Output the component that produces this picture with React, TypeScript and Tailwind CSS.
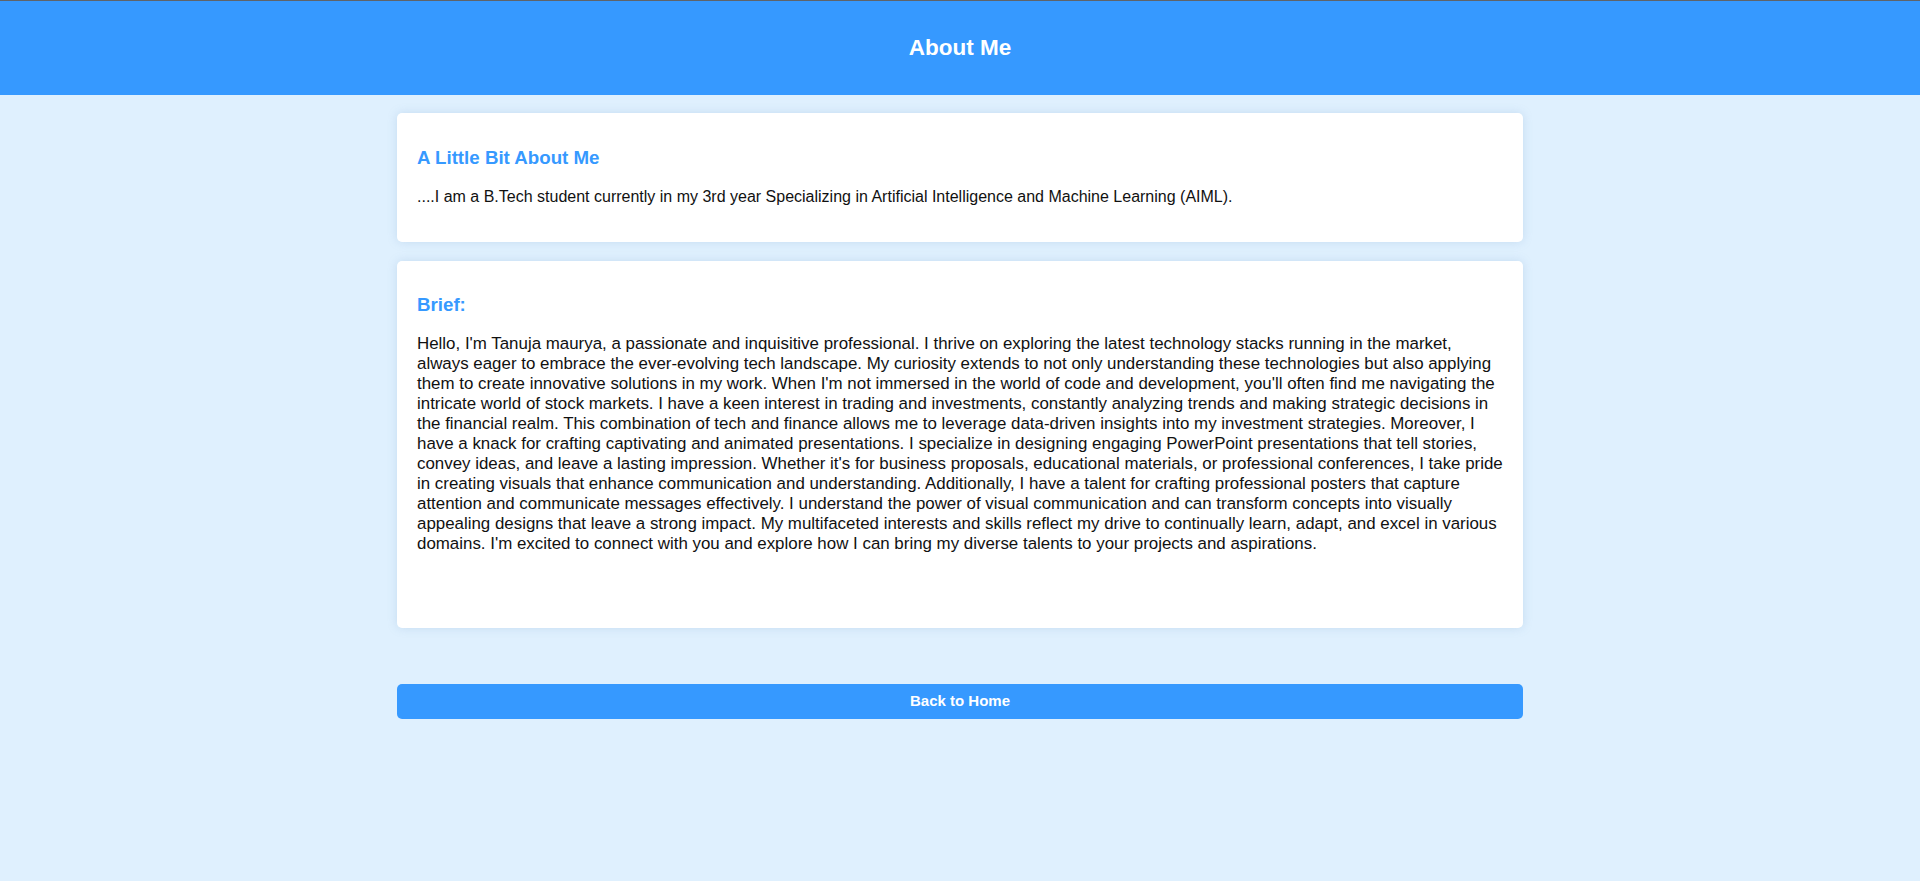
const BRIEF =
  "Hello, I'm Tanuja maurya, a passionate and inquisitive professional. I thrive on exploring the latest technology stacks running in the market, always eager to embrace the ever-evolving tech landscape. My curiosity extends to not only understanding these technologies but also applying them to create innovative solutions in my work. When I'm not immersed in the world of code and development, you'll often find me navigating the intricate world of stock markets. I have a keen interest in trading and investments, constantly analyzing trends and making strategic decisions in the financial realm. This combination of tech and finance allows me to leverage data-driven insights into my investment strategies. Moreover, I have a knack for crafting captivating and animated presentations. I specialize in designing engaging PowerPoint presentations that tell stories, convey ideas, and leave a lasting impression. Whether it's for business proposals, educational materials, or professional conferences, I take pride in creating visuals that enhance communication and understanding. Additionally, I have a talent for crafting professional posters that capture attention and communicate messages effectively. I understand the power of visual communication and can transform concepts into visually appealing designs that leave a strong impact. My multifaceted interests and skills reflect my drive to continually learn, adapt, and excel in various domains. I'm excited to connect with you and explore how I can bring my diverse talents to your projects and aspirations.";

function Card({ title, children, className, textClass }: { title: string; children: React.ReactNode; className: string; textClass: string }) {
  return (
    <section className={`rounded-[5px] bg-white px-5 shadow-[0_0_10px_rgba(120,160,200,0.25)] ${className}`}>
      <h3 className="text-[18.72px] font-bold leading-[22px] text-[#3699ff]">{title}</h3>
      <p className={`mt-[18px] leading-5 text-[#111] ${textClass}`}>{children}</p>
    </section>
  );
}

export default function App() {
  return (
    <main className="min-h-screen bg-[#dff0fe] font-['Liberation_Sans',Arial,sans-serif]">
      <header className="flex h-[95px] items-center justify-center border-t border-[#5f6368] bg-[#3699ff]">
        <h1 className="text-[22.5px] font-bold text-white">About Me</h1>
      </header>

      <div className="mx-auto w-[1126px] pt-[18px]">
        <Card title="A Little Bit About Me" className="pt-[34px] pb-[35px]" textClass="text-base">
          ....I am a B.Tech student currently in my 3rd year Specializing in Artificial Intelligence and Machine Learning (AIML).
        </Card>

        <Card title="Brief:" className="mt-[19px] pt-[33px] pb-[74px]" textClass="text-[16.9px]">
          {BRIEF}
        </Card>

        <button
          type="button"
          className="mt-[56px] flex h-[35px] w-full items-center justify-center rounded-[5px] bg-[#3699ff] text-[15px] font-bold text-white"
        >
          Back to Home
        </button>
      </div>
    </main>
  );
}
